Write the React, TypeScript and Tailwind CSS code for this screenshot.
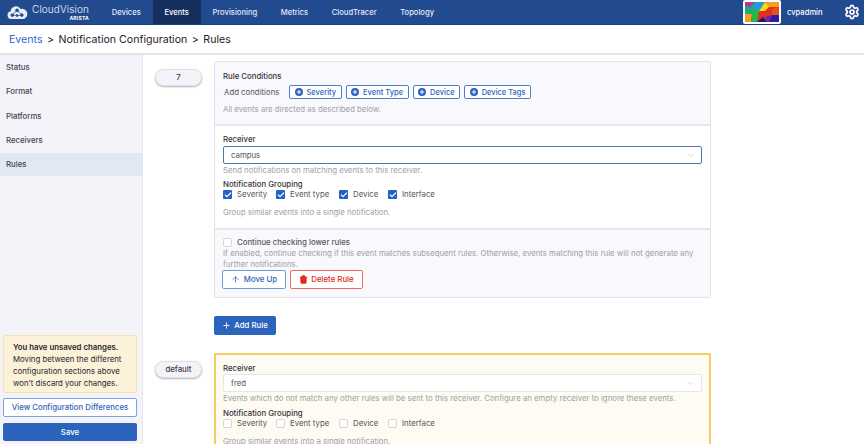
import { ArrowUp, Check, ChevronDown, Plus, Settings, Trash2 } from "lucide-react";

const navItems = ["Devices", "Events", "Provisioning", "Metrics", "CloudTracer", "Topology"];
const sideItems = ["Status", "Format", "Platforms", "Receivers", "Rules"];
const conditions = ["Severity", "Event Type", "Device", "Device Tags"];
const groupings = [
  { label: "Severity", width: "w-[53px]" },
  { label: "Event type", width: "w-[63px]" },
  { label: "Device", width: "w-[49px]" },
  { label: "Interface", width: "w-[60px]" },
];

function Logo() {
  return (
    <svg width="21" height="15" viewBox="0 0 24 17" className="shrink-0">
      <path d="M5 16a4.5 4.5 0 0 1-.8-8.9A6 6 0 0 1 15.5 4.6 5.6 5.6 0 0 1 19 16z" fill="#e8edf5" />
      <g stroke="#224b8f" strokeWidth="0.9" fill="#224b8f">
        <path d="M6 11.5 11.5 6 17 11.5 11.5 12z" fill="none" />
        <circle cx="6" cy="11.5" r="1.5" />
        <circle cx="11.5" cy="6" r="1.6" />
        <circle cx="17" cy="11.5" r="1.5" />
        <circle cx="11.5" cy="12" r="1.1" />
      </g>
    </svg>
  );
}

function Avatar() {
  return (
    <div className="h-[24px] w-[38px] rounded-[2px] bg-white p-[2px]">
      <svg viewBox="0 0 34 20" className="h-full w-full" preserveAspectRatio="none">
        <rect width="34" height="20" fill="#e0301e" />
        <polygon points="0,0 10,0 5,5 0,4" fill="#b03a8c" />
        <polygon points="0,4 5,5 7,12 0,12" fill="#17b08c" />
        <polygon points="0,12 7,12 6,20 0,20" fill="#f0a020" />
        <polygon points="7,12 5,5 14,9 12,20 6,20" fill="#20b84a" />
        <polygon points="10,0 20,0 14,9 5,5" fill="#1c9fd8" />
        <polygon points="20,0 34,0 34,5 24,5" fill="#f2a21e" />
        <polygon points="14,9 20,0 24,5 20,9" fill="#f7d81e" />
        <polygon points="27,7 34,5 34,13 27,13" fill="#e8501c" />
        <polygon points="24,20 34,20 34,13 27,13" fill="#2a1ca8" />
        <polygon points="12,20 18,15 22,20" fill="#101a70" />
        <polygon points="20,15 27,13 24,20 22,20" fill="#7a1cb0" />
      </svg>
    </div>
  );
}

function GroupChecks({ checked }: { checked: boolean }) {
  return (
    <div className="mt-[-1px] flex h-[11px] items-center">
      {groupings.map((g) => (
        <div key={g.label} className={`flex items-center gap-[5px] text-[#55565e] ${g.width}`}>
          <span
            className={
              checked
                ? "flex h-[9px] w-[9px] items-center justify-center rounded-[1px] bg-[#2463c4] text-white"
                : "h-[9px] w-[9px] rounded-[2px] border border-[#d5d5dc] bg-white"
            }
          >
            {checked && <Check size={8} strokeWidth={3.5} />}
          </span>
          <span>{g.label}</span>
        </div>
      ))}
    </div>
  );
}

export default function App() {
  return (
    <div className="flex h-[444px] w-[864px] flex-col overflow-hidden bg-white font-['Inter',sans-serif] text-[7.8px] leading-[11px]">
      <header className="flex h-[25px] shrink-0 items-stretch border-b border-[#1a3f7e] bg-[#224b8f] text-white">
        <div className="flex w-[100px] items-center pl-[7px]">
          <Logo />
          <div className="ml-[4px] flex flex-col items-end">
            <span className="text-[10px] font-light leading-[11px] tracking-[0.1px] text-[#eef2f8]">CloudVision</span>
            <span className="text-[5px] font-bold leading-[6px] tracking-[0.2px]">ARISTA</span>
          </div>
        </div>
        <nav className="flex text-[7.6px] font-medium text-[#e4eaf4]">
          <NavItems />
        </nav>
        <div className="ml-auto flex items-center">
          <Avatar />
          <span className="ml-[6px] w-[57px] text-[7.6px] font-medium">cvpadmin</span>
          <Settings size={16} strokeWidth={2.6} className="mr-[4px]" />
        </div>
      </header>

      <div className="z-10 flex h-[30px] shrink-0 items-center border-b-2 border-[#e4e4e6] bg-white pl-[9px] text-[10.6px] text-[#1f2024]">
        <span className="text-[#2f6ac6]">Events</span>
        <span className="mx-[4.5px]">&gt;</span>
        <span>Notification Configuration</span>
        <span className="mx-[4.5px]">&gt;</span>
        <span>Rules</span>
      </div>

      <div className="flex min-h-0 flex-1">
        <aside className="flex w-[143px] shrink-0 flex-col border-r border-[#e6e6ea] bg-[#f3f3f9] pb-[3px]">
          <ul className="font-medium text-[#3f4452]">
            {sideItems.map((item) => (
              <li
                key={item}
                className={
                  item === "Rules"
                    ? "flex h-[23px] items-center bg-[#e1e8f4] pl-[6px]"
                    : "flex h-[24.5px] items-center pl-[6px]"
                }
              >
                {item}
              </li>
            ))}
          </ul>
          <div className="mt-auto pl-[3px] pr-[5px]">
            <div className="h-[58px] rounded-[2px] border border-[#f7e3ae] bg-[#fcf2da] px-[9px] pt-[5px] leading-[12px] text-[#26262a]">
              <b className="font-semibold">You have unsaved changes.</b> Moving between the different configuration
              sections above won't discard your changes.
            </div>
            <button className="mt-[5px] flex h-[19px] w-full items-center justify-center rounded-[2px] border border-[#7fa2de] bg-white font-medium text-[#2f63b8]">
              View Configuration Differences
            </button>
            <button className="mt-[6px] flex h-[18px] w-full items-center justify-center rounded-[2px] bg-[#2b63bd] font-medium text-white">
              Save
            </button>
          </div>
        </aside>

        <main className="min-w-0 flex-1 overflow-hidden pl-[12px] pt-[6px]">
          <div className="flex gap-[12px]">
            <Pill label="7" />
            <div className="w-[497px] overflow-hidden rounded-[2px] border border-[#e3e3e7]">
              <section className="h-[62px] bg-[#f8f8fd] pl-[8px] pt-[9px]">
                <div className="font-medium text-[#33343a]">Rule Conditions</div>
                <div className="mt-[3px] flex items-center">
                  <span className="ml-[1px] w-[65px] text-[#55565e]">Add conditions</span>
                  <div className="flex gap-[4px]">
                    {conditions.map((c) => (
                      <button
                        key={c}
                        className="flex h-[14px] items-center gap-[4px] rounded-[2px] border border-[#4a80d0] bg-white px-[4.5px] text-[7.5px] font-medium text-[#2f63b8]"
                      >
                        <span className="flex h-[8px] w-[8px] items-center justify-center rounded-full bg-[#2b63bd] text-white">
                          <Plus size={6} strokeWidth={4} />
                        </span>
                        {c}
                      </button>
                    ))}
                  </div>
                </div>
                <div className="mt-[5px] text-[#a0a0a8]">All events are directed as described below.</div>
              </section>

              <section className="h-[106px] border-y-2 border-[#e6e6ea] bg-white px-[8px] pt-[8px]">
                <div className="font-medium text-[#33343a]">Receiver</div>
                <div className="mt-[1px] flex h-[18px] items-center justify-between rounded-[2px] border border-[#4f76b4] bg-white pl-[7px] pr-[6px] text-[#55565e]">
                  campus
                  <ChevronDown size={9} className="text-[#c5c5cc]" />
                </div>
                <div className="mt-[1px] text-[#a0a0a8]">Send notifications on matching events to this receiver.</div>
                <div className="mt-[3px] font-medium text-[#33343a]">Notification Grouping</div>
                <GroupChecks checked />
                <div className="mt-[7px] text-[#a0a0a8]">Group similar events into a single notification.</div>
              </section>

              <section className="h-[67px] bg-[#f8f8fd] px-[8px] pt-[7px]">
                <div className="flex items-center gap-[5px] font-medium text-[#55565e]">
                  <span className="h-[9px] w-[9px] rounded-[2px] border border-[#d5d5dc] bg-white" />
                  Continue checking lower rules
                </div>
                <p className="text-[#a0a0a8]">
                  If enabled, continue checking if this event matches subsequent rules. Otherwise, events matching
                  this rule will not generate any further notifications.
                </p>
                <div className="flex gap-[4px]">
                  <button className="ml-[-1px] flex h-[19px] w-[64px] items-center justify-center gap-[4px] rounded-[2px] border border-[#6f9ada] bg-white font-medium text-[#2f63b8]">
                    <ArrowUp size={9} strokeWidth={2} />
                    Move Up
                  </button>
                  <button className="flex h-[19px] w-[73px] items-center justify-center gap-[3px] rounded-[2px] border border-[#ee6a5f] bg-white font-medium text-[#dc2b20]">
                    <Trash2 size={9} strokeWidth={2.5} fill="#dc2b20" />
                    Delete Rule
                  </button>
                </div>
              </section>
            </div>
          </div>

          <div className="ml-[59px] mt-[18px]">
            <button className="flex h-[19px] w-[62px] items-center justify-center gap-[3px] rounded-[2px] bg-[#2b63bd] font-medium text-white">
              <Plus size={9} strokeWidth={2.5} />
              Add Rule
            </button>
          </div>

          <div className="mt-[18px] flex gap-[12px]">
            <Pill label="default" />
            <div className="h-[120px] w-[497px] rounded-t-[2px] border-x-2 border-t-2 border-[#f5cd63] bg-[#fefbf2] px-[7px] pt-[8px]">
              <div className="font-medium text-[#33343a]">Receiver</div>
              <div className="flex h-[18px] items-center justify-between rounded-[2px] border border-[#e6e6ea] bg-white pl-[7px] pr-[6px] text-[#55565e]">
                fred
                <ChevronDown size={9} className="text-[#c5c5cc]" />
              </div>
              <div className="mt-[1px] text-[#a0a0a8]">
                Events which do not match any other rules will be sent to this receiver. Configure an empty receiver
                to ignore these events.
              </div>
              <div className="mt-[4px] font-medium text-[#33343a]">Notification Grouping</div>
              <GroupChecks checked={false} />
              <div className="mt-[7px] text-[#a0a0a8]">Group similar events into a single notification.</div>
            </div>
          </div>
        </main>
      </div>
    </div>
  );
}

function NavItems() {
  return (
    <>
      {navItems.map((item) => (
        <span
          key={item}
          className={
            item === "Events"
              ? "flex items-center bg-[#152f5e] px-[11.8px] text-white"
              : "flex items-center px-[11.8px]"
          }
        >
          {item}
        </span>
      ))}
    </>
  );
}

function Pill({ label }: { label: string }) {
  return (
    <div className="mt-[8px] flex h-[17px] w-[47px] shrink-0 items-center justify-center rounded-full border border-[#e0e0e4] bg-[#f3f3f9] font-medium text-[#3b3c42] shadow-[0_1px_2px_rgba(0,0,0,0.3)]">
      {label}
    </div>
  );
}
